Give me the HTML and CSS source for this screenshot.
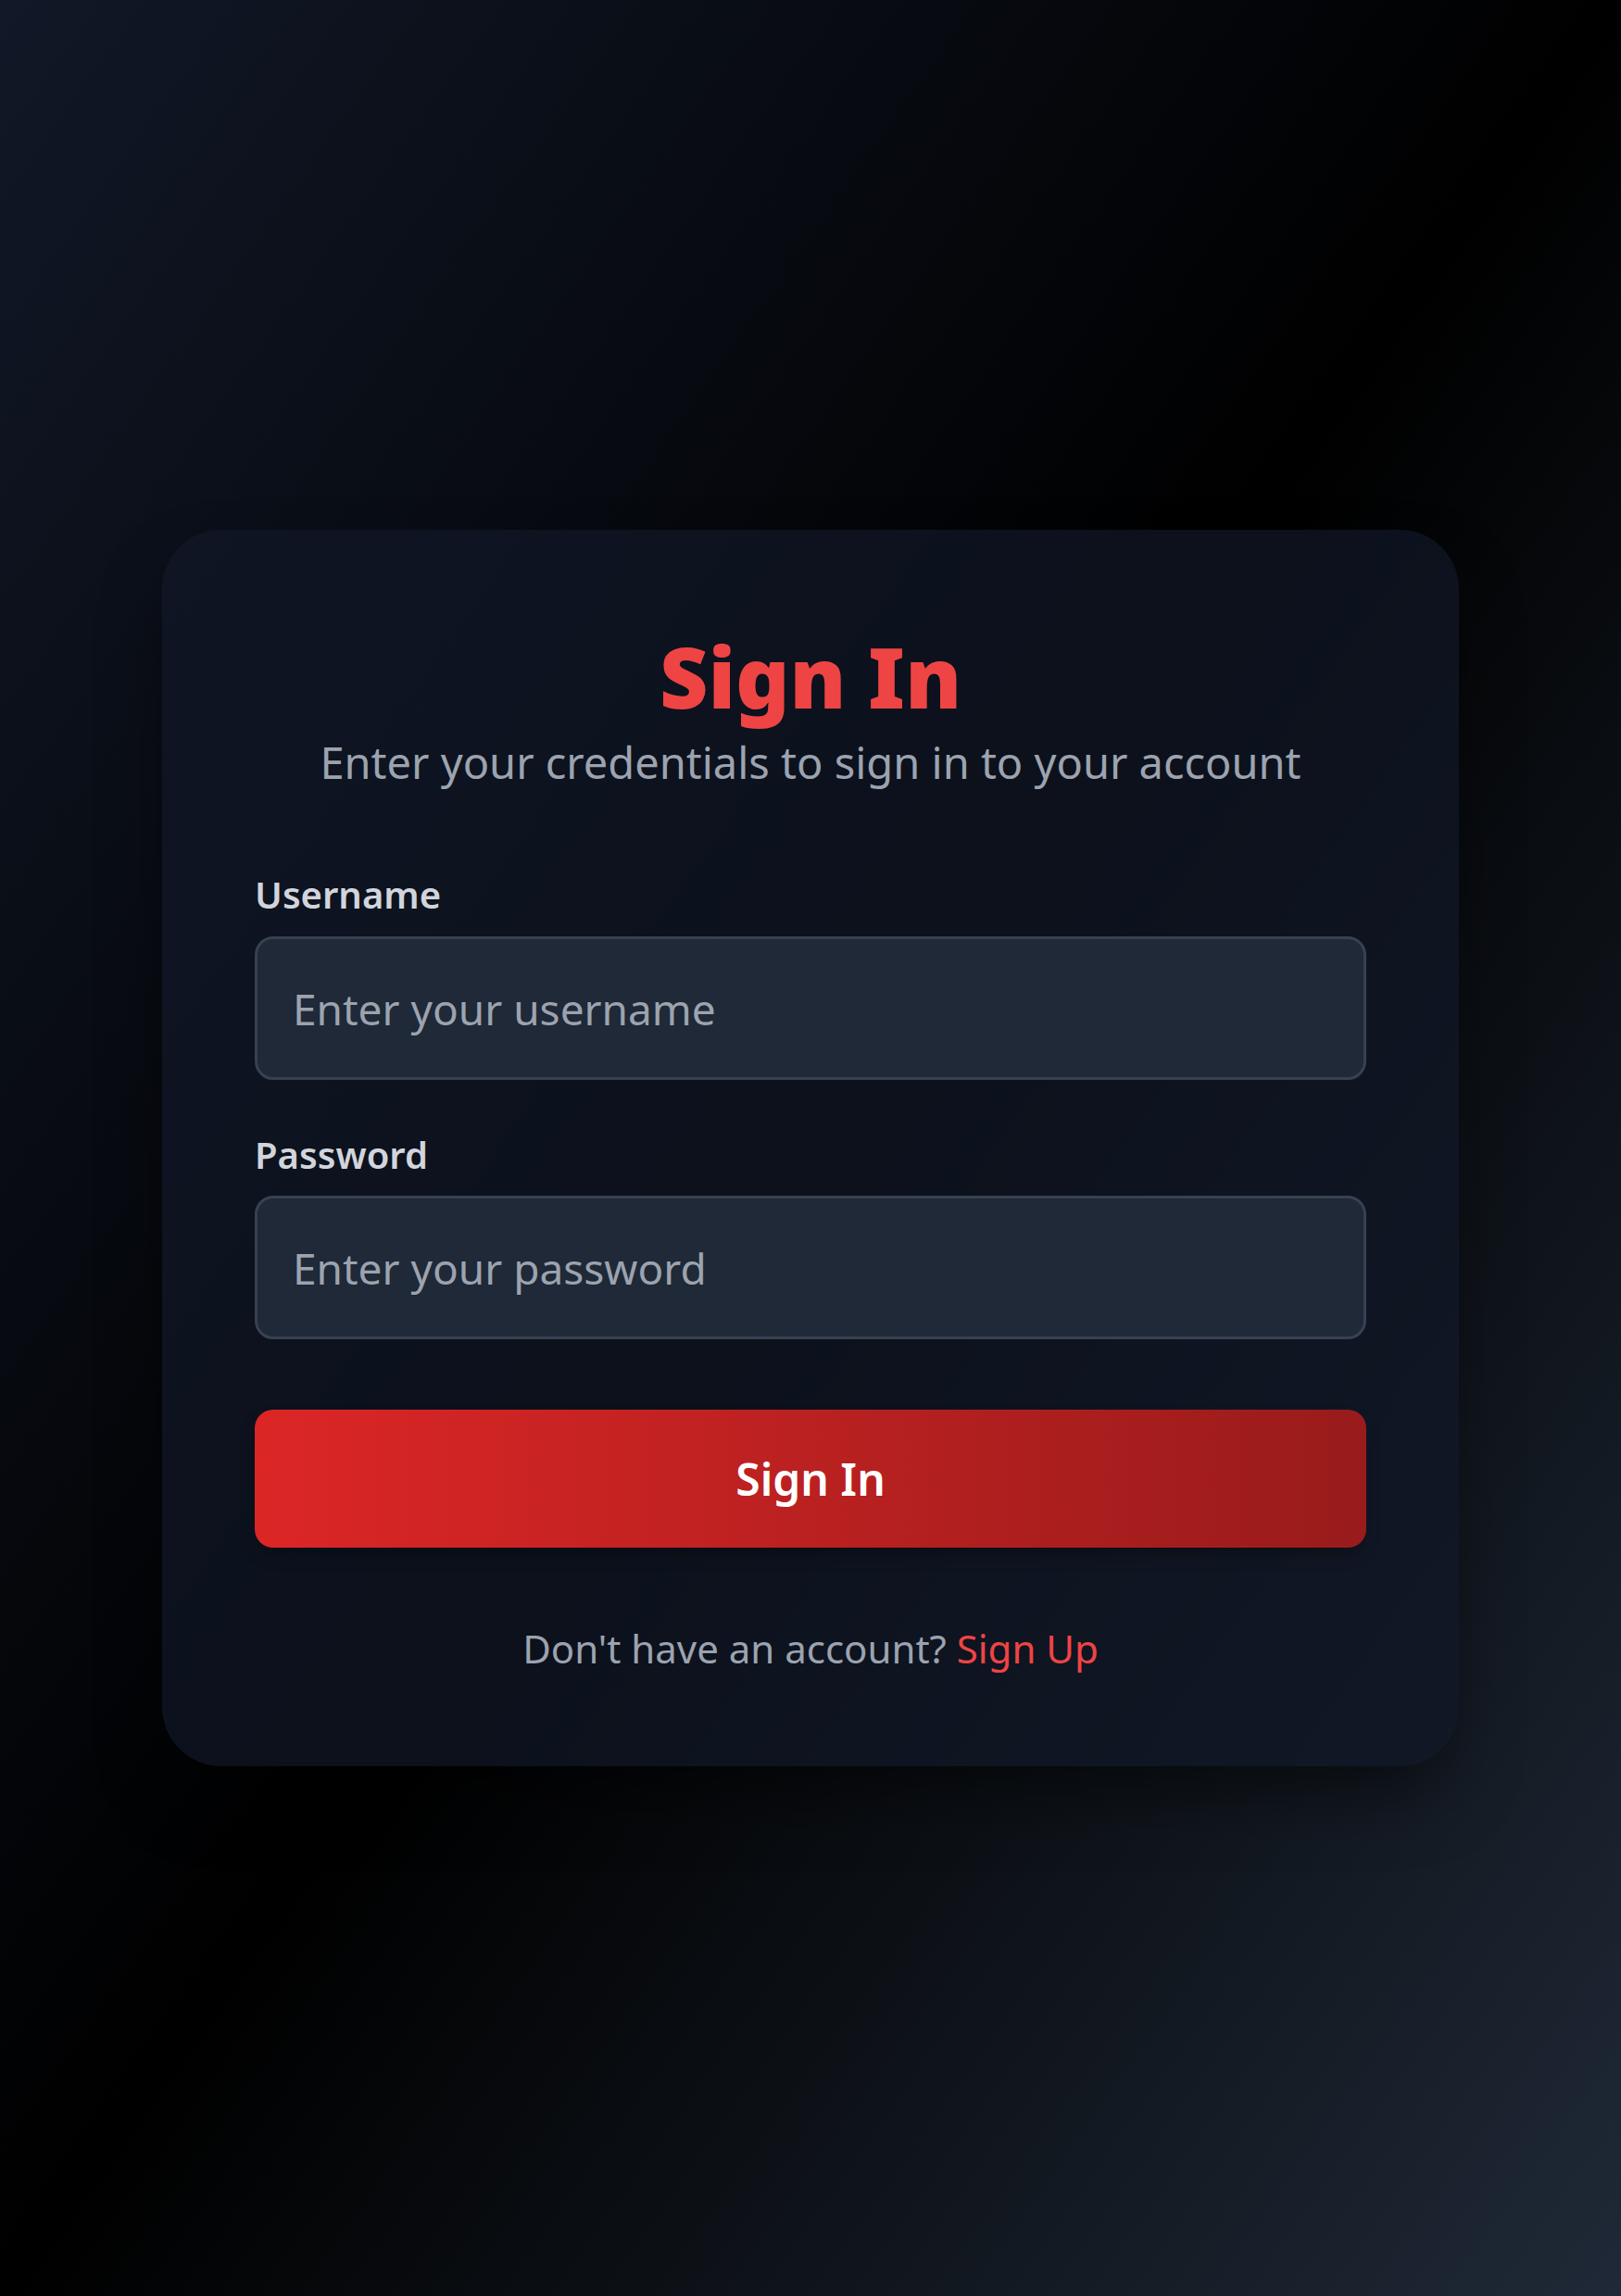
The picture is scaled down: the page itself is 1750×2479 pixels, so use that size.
FILE: index.html
```html
<!DOCTYPE html>
<html lang="en">
<head>
<meta charset="utf-8">
<title>Sign In</title>
<link rel="stylesheet" href="styles.css">
</head>
<body>
<main class="page">
  <section class="card">
    <h1 class="title">Sign In</h1>
    <p class="subtitle">Enter your credentials to sign in to your account</p>
    <form class="form">
      <label class="label" for="username">Username</label>
      <input class="input" id="username" type="text" placeholder="Enter your username">
      <label class="label label-gap" for="password">Password</label>
      <input class="input" id="password" type="password" placeholder="Enter your password">
      <button class="button" type="button">Sign In</button>
    </form>
    <p class="footer">Don't have an account? <a class="link" href="#">Sign Up</a></p>
  </section>
</main>
</body>
</html>
```

FILE: styles.css
```css
* { box-sizing: border-box; }
html, body { margin: 0; padding: 0; }
body {
  font-family: "Noto Sans", "Open Sans", sans-serif;
  min-height: 2479px;
  background: linear-gradient(to bottom right, #111827 0%, #000000 50%, #1f2937 100%);
}
.page {
  min-height: 2479px;
  display: flex;
  align-items: center;
  justify-content: center;
}
.card {
  width: 1400px;
  padding: 100px 100px 97px;
  border-radius: 64px;
  background: rgba(17, 24, 39, 0.72);
  box-shadow: 0 40px 80px -20px rgba(0, 0, 0, 0.6);
  display: flex;
  flex-direction: column;
}
.title {
  margin: 0;
  text-align: center;
  color: #ef4444;
  font-size: 91px;
  font-weight: 900;
  line-height: 116px;
}
.subtitle {
  margin: 0;
  text-align: center;
  color: #9ca3af;
  font-size: 47px;
  line-height: 70px;
  font-weight: 400;
}
.form {
  display: flex;
  flex-direction: column;
  margin-top: 78px;
}
.label {
  color: #d1d5db;
  font-size: 40px;
  font-weight: 600;
  line-height: 60px;
  margin-bottom: 15px;
}
.label-gap { margin-top: 51px; margin-bottom: 14px; }
.input {
  height: 155px;
  width: 100%;
  padding: 0 38px;
  border: 3px solid #374151;
  border-radius: 20px;
  background: #1f2937;
  color: #e5e7eb;
  font-family: inherit;
  font-size: 46px;
  outline: none;
}
.input::placeholder { color: #9ca3af; opacity: 1; }
.button {
  margin-top: 76px;
  height: 149px;
  border: none;
  border-radius: 20px;
  background: linear-gradient(to right, #dc2626, #991b1b);
  color: #ffffff;
  font-family: inherit;
  font-size: 48px;
  font-weight: 600;
  box-shadow: 0 10px 20px -6px rgba(0, 0, 0, 0.4);
}
.footer {
  margin: 79px 0 0;
  text-align: center;
  color: #9ca3af;
  font-size: 42px;
  line-height: 60px;
}
.link {
  color: #ef4444;
  text-decoration: none;
}
```
